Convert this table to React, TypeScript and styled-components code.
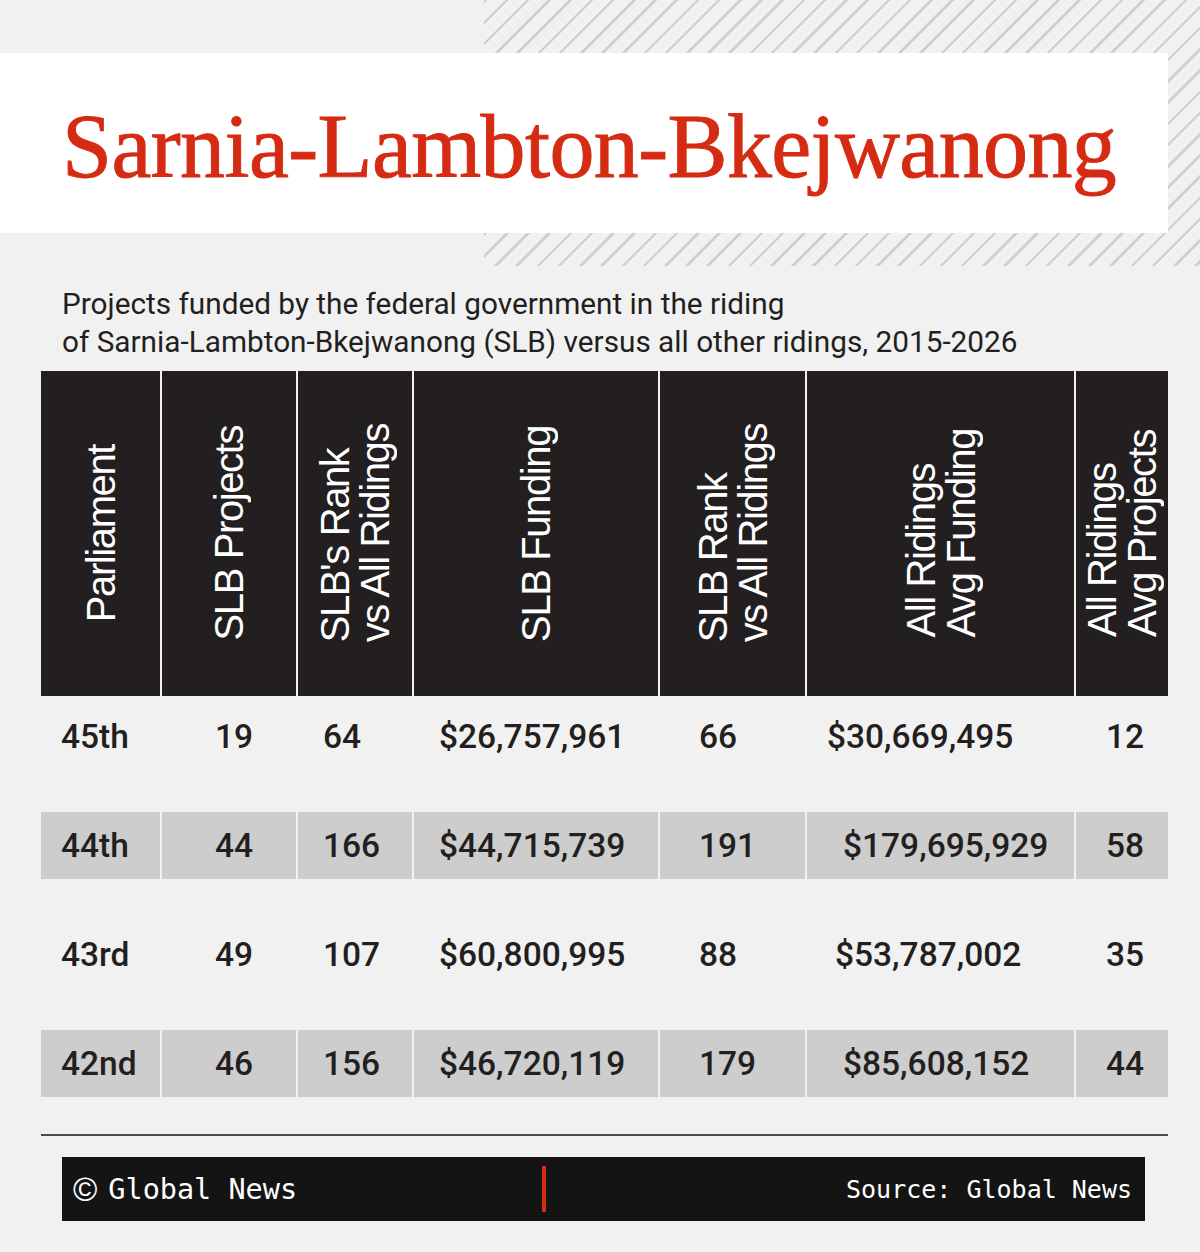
import React from 'react';
import styled, { createGlobalStyle } from 'styled-components';

const GlobalStyle = createGlobalStyle`
  html, body { margin: 0; padding: 0; background: #f2f1f1; }
  body { font-family: Roboto, "Liberation Sans", sans-serif; }
`;

const Page = styled.div`
  width: 1200px;
  height: 1252px;
  background: #f2f1f1;
  overflow: hidden;
`;

const Masthead = styled.header`
  height: 266px;
  box-sizing: border-box;
  padding-top: 53px;
  background: repeating-linear-gradient(135deg, #cfcfcf 0 2.5px, transparent 2.5px 15px) 484px 0 / 716px 266px no-repeat;
`;

const TitleBand = styled.div`
  width: 1168px;
  height: 180px;
  box-sizing: border-box;
  padding: 8px 0 0 62px;
  background: #ffffff;
  display: flex;
  align-items: center;
`;

const Title = styled.h1`
  margin: 0;
  font-family: "Liberation Serif", "DejaVu Serif", serif;
  font-weight: 400;
  font-size: 90px;
  line-height: 1;
  letter-spacing: -0.62px;
  color: #d52b12;
  -webkit-text-stroke: 0.9px #d52b12;
  white-space: nowrap;
`;

const Subtitle = styled.p`
  margin: 19px 0 0 62px;
  font-family: Roboto, "Liberation Sans", sans-serif;
  font-size: 29.75px;
  line-height: 38px;
  color: #231f20;
`;

const Table = styled.section`
  margin: 10px 0 0 41px;
  width: 1127px;
`;

const Grid = styled.div`
  display: grid;
  grid-template-columns: 119px 134px 114px 244px 145px 267px 92px;
  column-gap: 2px;
`;

const HeaderRow = styled(Grid)`
  height: 325px;
`;

const HeadCell = styled.div`
  background: #231f20;
  display: flex;
  align-items: center;
  justify-content: center;
`;

const HeadLabel = styled.span`
  writing-mode: vertical-rl;
  transform: rotate(180deg);
  font-family: "Liberation Sans", Arial, sans-serif;
  font-size: 40px;
  line-height: 40px;
  letter-spacing: -1.4px;
  color: #ffffff;
  white-space: nowrap;
  text-align: start;
`;

const Body = styled.div`
  display: flex;
  flex-direction: column;
  gap: 42px;
  padding-top: 7px;
`;

const Row = styled(Grid)`
  height: 67px;
`;

const Cell = styled.div<{ $shaded: boolean; $indent: number }>`
  background: ${(p) => (p.$shaded ? '#cdcdcd' : 'transparent')};
  padding-left: ${(p) => p.$indent}px;
  font-family: Roboto, "Liberation Sans", sans-serif;
  font-weight: 500;
  font-size: 33.5px;
  line-height: 67px;
  color: #231f20;
  white-space: nowrap;
`;

const Divider = styled.hr`
  margin: 37px 0 0 41px;
  width: 1127px;
  height: 2px;
  border: 0;
  background: #4d4a55;
`;

const FooterBar = styled.footer`
  margin: 21px 0 0 62px;
  width: 1083px;
  height: 64px;
  background: #151414;
  display: grid;
  grid-template-columns: 480px 4px 1fr;
  align-items: center;
`;

const Credit = styled.span`
  padding-left: 11px;
  display: flex;
  align-items: center;
  font-family: "DejaVu Sans Mono", "Liberation Mono", monospace;
  font-size: 28.5px;
  color: #ffffff;
  white-space: nowrap;
`;

const CopyMark = styled.span`
  margin-right: 11px;
  font-family: "Liberation Sans", Arial, sans-serif;
  font-size: 33px;
  line-height: 1;
`;

const Accent = styled.span`
  width: 4px;
  height: 46px;
  background: #d42e12;
`;

const Source = styled.span`
  padding-right: 13px;
  text-align: right;
  font-family: "DejaVu Sans Mono", "Liberation Mono", monospace;
  font-size: 25px;
  color: #ffffff;
  white-space: nowrap;
`;

const headers: string[][] = [
  ['Parliament'],
  ['SLB Projects'],
  ["SLB's Rank", 'vs All Ridings'],
  ['SLB Funding'],
  ['SLB Rank', 'vs All Ridings'],
  ['All Ridings', 'Avg Funding'],
  ['All Ridings', 'Avg Projects'],
];

const indents = [20, 53, 25, 25, 39, 0, 30];

const rows = [
  { shaded: false, avgIndent: 20, cells: ['45th', '19', '64', '$26,757,961', '66', '$30,669,495', '12'] },
  { shaded: true, avgIndent: 36, cells: ['44th', '44', '166', '$44,715,739', '191', '$179,695,929', '58'] },
  { shaded: false, avgIndent: 28, cells: ['43rd', '49', '107', '$60,800,995', '88', '$53,787,002', '35'] },
  { shaded: true, avgIndent: 36, cells: ['42nd', '46', '156', '$46,720,119', '179', '$85,608,152', '44'] },
];

export default function App() {
  return (
    <Page>
      <GlobalStyle />
      <Masthead>
        <TitleBand>
          <Title>Sarnia-Lambton-Bkejwanong</Title>
        </TitleBand>
      </Masthead>
      <Subtitle>
        Projects funded by the federal government in the riding
        <br />
        of Sarnia-Lambton-Bkejwanong (SLB) versus all other ridings, 2015-2026
      </Subtitle>
      <Table>
        <HeaderRow>
          {headers.map((lines, i) => (
            <HeadCell key={i}>
              <HeadLabel>
                {lines.map((l, j) => (
                  <React.Fragment key={j}>
                    {j > 0 && <br />}
                    {l}
                  </React.Fragment>
                ))}
              </HeadLabel>
            </HeadCell>
          ))}
        </HeaderRow>
        <Body>
          {rows.map((r, i) => (
            <Row key={i}>
              {r.cells.map((c, j) => (
                <Cell key={j} $shaded={r.shaded} $indent={j === 5 ? r.avgIndent : indents[j]}>
                  {c}
                </Cell>
              ))}
            </Row>
          ))}
        </Body>
      </Table>
      <Divider />
      <FooterBar>
        <Credit>
          <CopyMark>©</CopyMark>
          Global News
        </Credit>
        <Accent />
        <Source>Source: Global News</Source>
      </FooterBar>
    </Page>
  );
}
